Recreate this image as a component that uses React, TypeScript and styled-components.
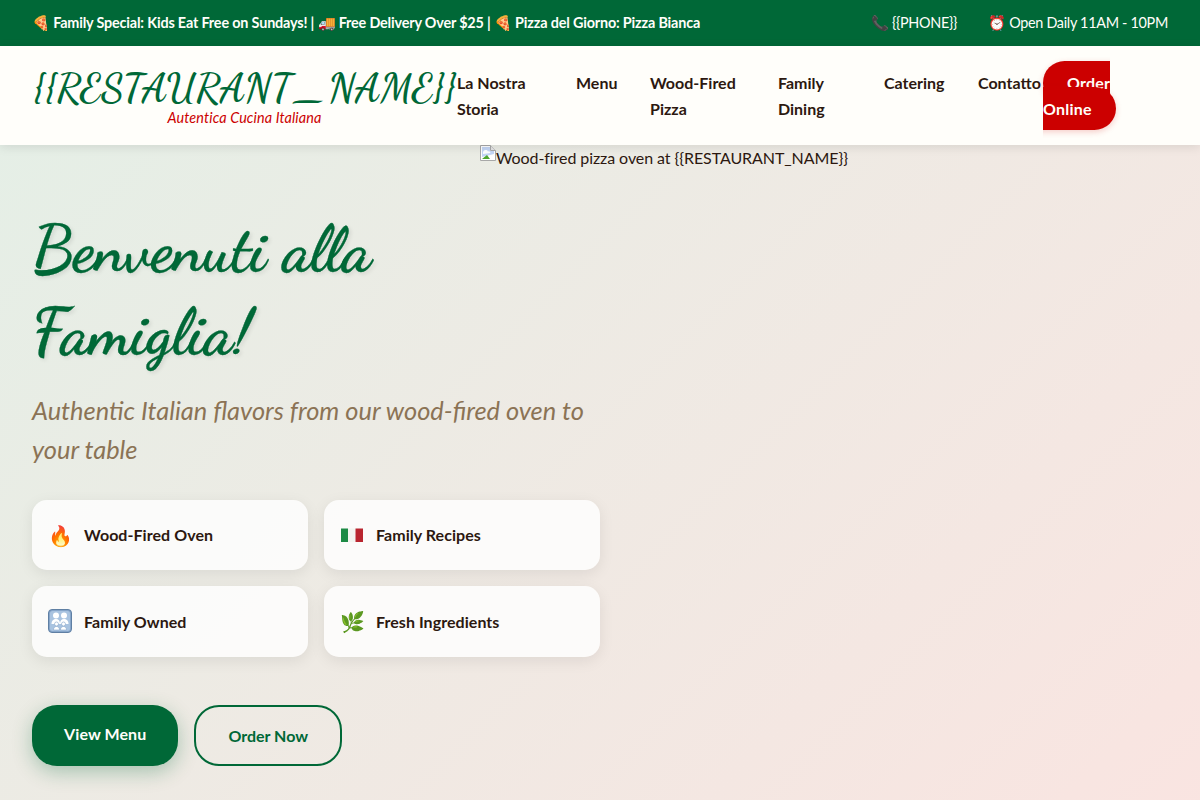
import React from "react";
import styled, { createGlobalStyle } from "styled-components";

const Global = createGlobalStyle`
  * { margin: 0; padding: 0; box-sizing: border-box; }
  html, body { overflow: hidden; height: 800px; }
  body {
    font-family: Lato, "Noto Sans", sans-serif;
    line-height: 1.6;
    color: #2c1810;
    background: #fffefa;
  }
`;

const TopBar = styled.div`
  height: 46px;
  padding: 0 32px;
  background: #006837;
  color: #fffefa;
  font-size: 14.4px;
  display: flex;
  align-items: center;
  justify-content: space-between;
`;
const Promo = styled.div`
  font-weight: 700;
  letter-spacing: -0.17px;
`;
const Contact = styled.div`
  display: flex;
  gap: 31px;
  letter-spacing: -0.3px;
`;

const Header = styled.header`
  position: relative;
  z-index: 2;
  background: #fffefa;
  padding: 16px 32px;
  display: flex;
  align-items: center;
  box-shadow: 0 2px 10px rgba(0, 0, 0, 0.1);
`;
const Logo = styled.div`
  flex: none;
  width: 425px;
  text-align: center;
  white-space: nowrap;
`;
const LogoName = styled.div`
  font-family: "Dancing Script", cursive;
  font-size: 40.8px;
  font-weight: 600;
  height: 44px;
  line-height: 52px;
  color: #006837;
`;
const Tagline = styled.div`
  font-size: 14.4px;
  font-style: italic;
  color: #cc0000;
  letter-spacing: 0.12px;
`;
const Nav = styled.ul`
  list-style: none;
  display: flex;
  gap: 32px;
`;
const NavItem = styled.li<{ $w: number }>`
  flex: none;
  width: ${(p) => p.$w}px;
`;
const OrderItem = styled.li`
  flex: none;
  width: 72px;
  margin-left: -32px;
`;
const NavLink = styled.a`
  font-weight: 700;
  color: #2c1810;
  text-decoration: none;
`;
const OrderLink = styled.a`
  font-weight: 700;
  color: #fffefa;
  background: #cc0000;
  padding: 12px 24px 12.8px;
  border-radius: 25px;
  letter-spacing: 0.2px;
  box-shadow: 0 2px 6px rgba(204, 0, 0, 0.2);
`;

const Hero = styled.section`
  position: relative;
  height: 685px;
  background: linear-gradient(135deg, rgba(0, 104, 55, 0.1), rgba(204, 0, 0, 0.1));
`;
const HeroImage = styled.div`
  position: absolute;
  top: 0;
  right: 0;
  width: 60%;
  height: 100%;
  letter-spacing: -0.08px;
`;
const BrokenIcon = styled.svg`
  width: 16px;
  height: 16px;
  vertical-align: top;
`;
const HeroContent = styled.div`
  position: relative;
  width: 632px;
  padding: 63px 32px 64px;
`;
const Title = styled.h1`
  width: 500px;
  font-family: "Dancing Script", cursive;
  font-size: 64px;
  font-weight: 700;
  line-height: 1.3;
  color: #006837;
  -webkit-text-stroke: 0.3px #006837;
  text-shadow: 2px 2px 4px rgba(0, 0, 0, 0.1);
  margin-bottom: 17px;
`;
const Subtitle = styled.p`
  width: 568px;
  font-size: 25.4px;
  line-height: 38.4px;
  font-style: italic;
  color: #8b7355;
  margin-bottom: 31.6px;
`;
const Features = styled.div`
  width: 568px;
  display: grid;
  grid-template-columns: 1fr 1fr;
  gap: 16px;
  margin-bottom: 48px;
`;
const Feature = styled.div`
  display: flex;
  align-items: center;
  gap: 12px;
  padding: 16px;
  border-radius: 15px;
  background: rgba(255, 255, 255, 0.8);
  box-shadow: 0 4px 15px rgba(0, 0, 0, 0.08);
`;
const FeatureIcon = styled.span`
  flex: none;
  width: 24px;
  height: 38.4px;
  display: flex;
  align-items: center;
  justify-content: center;
  font-size: 20px;
  line-height: 38.4px;
`;
const IconArt = styled.svg`
  width: 24px;
  height: 24px;
  display: block;
`;
const FeatureLabel = styled.span`
  font-weight: 700;
  letter-spacing: 0.05px;
`;
const Actions = styled.div`
  display: flex;
  gap: 16px;
`;
const PrimaryButton = styled.a`
  padding: 16px 32px;
  border-radius: 25px;
  background: #006837;
  color: #fffefa;
  font-size: 16px;
  font-weight: 700;
  letter-spacing: 0.1px;
  box-shadow: 0 6px 20px rgba(0, 104, 55, 0.3);
`;
const GhostButton = styled.a`
  padding: 16px 32px;
  border-radius: 25px;
  border: 2px solid #006837;
  color: #006837;
  font-size: 16px;
  font-weight: 700;
`;

const FamilyIcon = () => (
  <IconArt viewBox="0 0 24 24">
    <rect x="0.5" y="0.5" width="23" height="23" rx="3.5" fill="#86a5c9" stroke="#5f7fa3" />
    <rect x="2" y="2" width="20" height="20" rx="2.5" fill="#a9c3e0" />
    <circle cx="8" cy="6.5" r="3" fill="#fff" />
    <circle cx="16" cy="6.5" r="3" fill="#fff" />
    <path d="M3.5 15C3.5 11.5 5.5 10 8 10C10.5 10 12 11.5 12 15Z" fill="#fff" />
    <path d="M12 15C12 11.5 13.5 10 16 10C18.5 10 20.5 11.5 20.5 15Z" fill="#fff" />
    <circle cx="8.5" cy="15" r="2" fill="#fff" stroke="#86a5c9" strokeWidth="0.6" />
    <circle cx="15.5" cy="15" r="2" fill="#fff" stroke="#86a5c9" strokeWidth="0.6" />
    <path d="M5.5 21C5.5 18.5 7 17.5 8.5 17.5C10 17.5 11.5 18.5 11.5 21Z" fill="#fff" stroke="#86a5c9" strokeWidth="0.6" />
    <path d="M12.5 21C12.5 18.5 14 17.5 15.5 17.5C17 17.5 18.5 18.5 18.5 21Z" fill="#fff" stroke="#86a5c9" strokeWidth="0.6" />
  </IconArt>
);

const FlagIcon = () => (
  <IconArt viewBox="0 0 24 24">
    <path d="M1 5.5H8V19H1Z" fill="#1d8a45" />
    <path d="M8 5.5H15.5V19H8Z" fill="#f4f4f0" />
    <path d="M15.5 5.5H23V19H15.5Z" fill="#b9252f" />
  </IconArt>
);

const features: [React.ReactNode, string][] = [
  ["🔥", "Wood-Fired Oven"],
  [<FlagIcon />, "Family Recipes"],
  [<FamilyIcon />, "Family Owned"],
  ["🌿", "Fresh Ingredients"],
];
const links: [string, number][] = [
  ["La Nostra Storia", 87],
  ["Menu", 42],
  ["Wood-Fired Pizza", 96],
  ["Family Dining", 74],
  ["Catering", 62],
  ["Contatto", 65],
];

export default function App() {
  return (
    <>
      <Global />
      <TopBar>
        <Promo>🍕 Family Special: Kids Eat Free on Sundays! | 🚚 Free Delivery Over $25 | 🍕 Pizza del Giorno: Pizza Bianca</Promo>
        <Contact>
          <span>📞 {"{{PHONE}}"}</span>
          <span>⏰ Open Daily 11AM - 10PM</span>
        </Contact>
      </TopBar>
      <Header>
        <Logo>
          <LogoName>{"{{RESTAURANT_NAME}}"}</LogoName>
          <Tagline>Autentica Cucina Italiana</Tagline>
        </Logo>
        <Nav>
          {links.map(([label, w]) => (
            <NavItem key={label} $w={w}>
              <NavLink>{label}</NavLink>
            </NavItem>
          ))}
          <OrderItem>
            <OrderLink>Order Online</OrderLink>
          </OrderItem>
        </Nav>
      </Header>
      <Hero>
        <HeroImage>
          <BrokenIcon viewBox="0 0 16 16">
            <path d="M0.5 0.5H10.5L15.5 5.5V15.5H0.5Z" fill="#fff" stroke="#a8a8a8" />
            <path d="M10.5 0.5V5.5H15.5" fill="#e4e4e4" stroke="#a8a8a8" />
            <path d="M2 2H10V6H14V9L2 12Z" fill="#c4d6f5" />
            <path d="M3 7C4 4.5 7 4.5 8 6.5C9 6 10 6.5 10.5 8L3 9Z" fill="#fff" />
            <path d="M2 14L7 10L10 14Z" fill="#4ea62e" />
          </BrokenIcon>
          Wood-fired pizza oven at {"{{RESTAURANT_NAME}}"}
        </HeroImage>
        <HeroContent>
          <Title>Benvenuti alla Famiglia!</Title>
          <Subtitle>Authentic Italian flavors from our wood-fired oven to your table</Subtitle>
          <Features>
            {features.map(([icon, label]) => (
              <Feature key={label}>
                <FeatureIcon>{icon}</FeatureIcon>
                <FeatureLabel>{label}</FeatureLabel>
              </Feature>
            ))}
          </Features>
          <Actions>
            <PrimaryButton>View Menu</PrimaryButton>
            <GhostButton>Order Now</GhostButton>
          </Actions>
        </HeroContent>
      </Hero>
    </>
  );
}
